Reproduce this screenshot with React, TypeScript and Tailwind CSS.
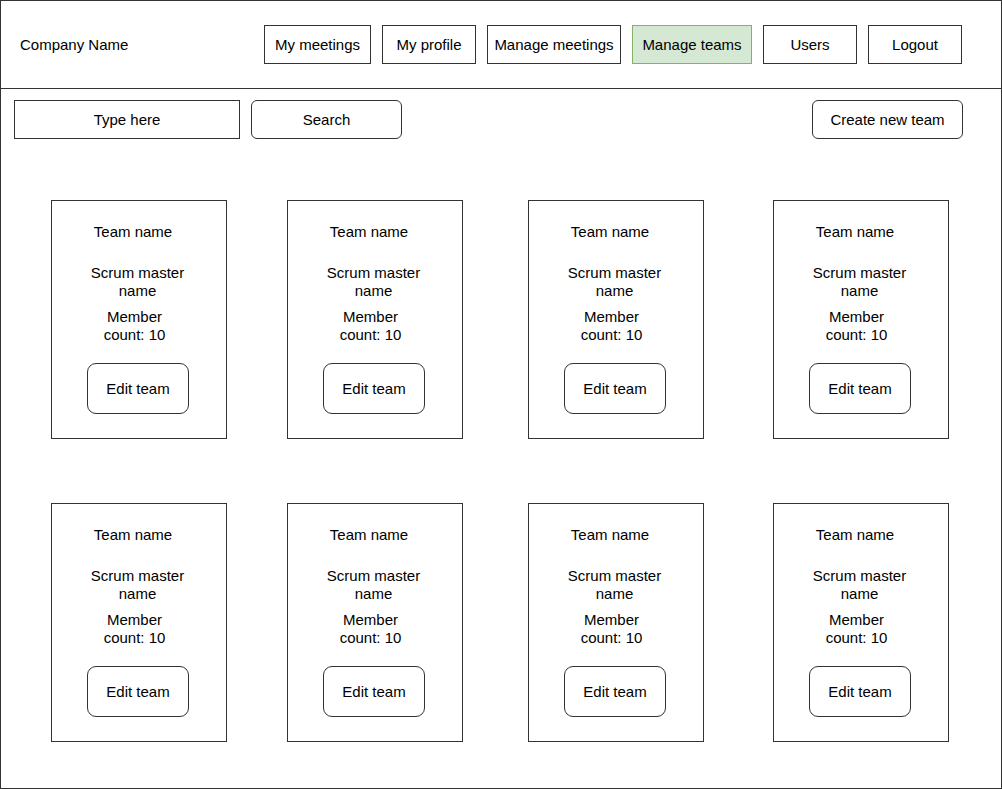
import React from "react";

const navItems = [
  { label: "My meetings", cls: "w-[107px]" },
  { label: "My profile", cls: "w-[94px]" },
  { label: "Manage meetings", cls: "w-[134px]" },
  { label: "Manage teams", cls: "w-[120px]", active: true },
  { label: "Users", cls: "w-[94px]" },
  { label: "Logout", cls: "w-[94px]" },
];

const cardMargins = ["ml-0", "ml-[60px]", "ml-[65px]", "ml-[69px]"];

const TeamCard = ({ margin }: { margin: string }) => {
  return (
    <div
      className={`${margin} w-[176px] h-[239px] border border-[#333] flex flex-col items-center pt-[22px] leading-[18px]`}
    >
      <p className="mr-[12px]">Team name</p>
      <p className="mt-[23px] mr-[3px] text-center">
        Scrum master <br />
        name
      </p>
      <p className="mt-[8px] mr-[9px] text-center">
        Member <br />
        count: 10
      </p>
      <button className="mt-[19px] mr-[2px] w-[102px] h-[51px] border border-[#333] rounded-[9px] bg-white pt-[1px]">
        Edit team
      </button>
    </div>
  );
};

export default function App() {
  return (
    <div className="w-[1002px] h-[789px] border border-[#333] bg-white text-black text-[15px] leading-[18px] font-['Liberation_Sans',Arial,sans-serif]">
      <header className="h-[88px] border-b border-[#333] flex items-start">
        <div className="w-[263px] pl-[19px] h-[87px] flex items-center">
          Company Name
        </div>
        <nav className="flex gap-[11px] pt-[24px]">
          {navItems.map((item) => (
            <button
              key={item.label}
              className={`${item.cls} h-[39px] border flex items-center justify-center ${
                item.active
                  ? "bg-[#d5e8d4] border-[#82b366]"
                  : "bg-white border-[#333]"
              }`}
            >
              {item.label}
            </button>
          ))}
        </nav>
      </header>

      <div className="flex pt-[11px] pl-[13px] pr-[38px]">
        <div className="w-[226px] h-[39px] border border-[#333] flex items-center justify-center">
          Type here
        </div>
        <button className="ml-[11px] w-[151px] h-[39px] border border-[#333] rounded-[6px]">
          Search
        </button>
        <button className="ml-auto w-[151px] h-[39px] border border-[#333] rounded-[6px]">
          Create new team
        </button>
      </div>

      <div className="pl-[50px] pt-[61px]">
        <div className="flex">
          {cardMargins.map((m, i) => (
            <TeamCard key={i} margin={m} />
          ))}
        </div>
        <div className="flex mt-[64px]">
          {cardMargins.map((m, i) => (
            <TeamCard key={i} margin={m} />
          ))}
        </div>
      </div>
    </div>
  );
}
